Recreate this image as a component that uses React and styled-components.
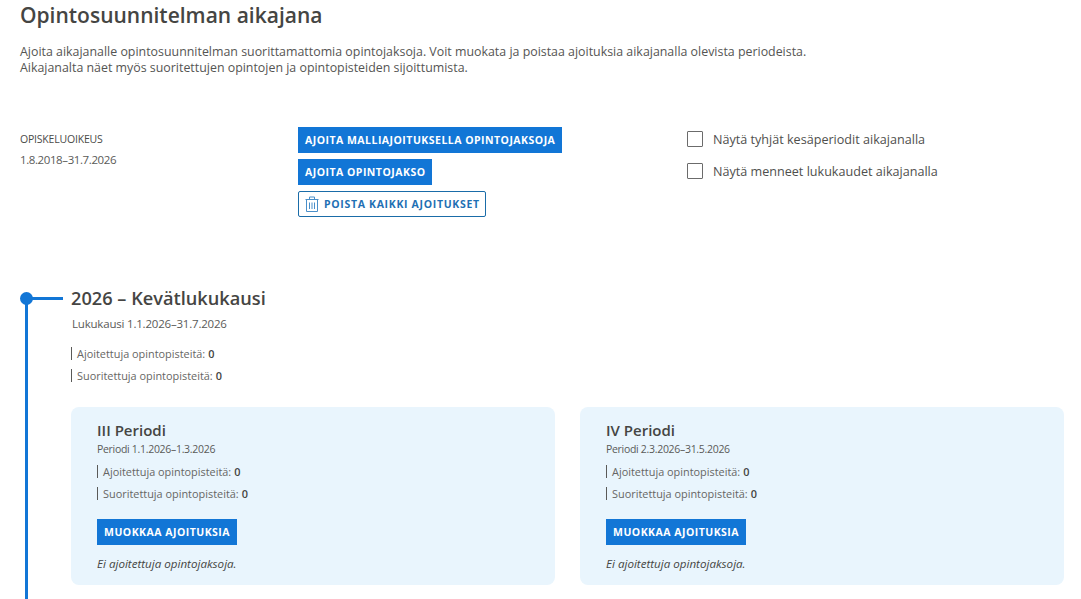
import styled, { createGlobalStyle } from "styled-components";

const GlobalStyle = createGlobalStyle`
  html, body {
    margin: 0;
    padding: 0;
    background: #fff;
    color: #4a4a48;
    font-family: "Open Sans", "Noto Sans", sans-serif;
    overflow: hidden;
  }
`;

const Page = styled.div`
  width: 1081px;
  height: 599px;
  box-sizing: border-box;
  padding: 0 17px 0 20px;
  overflow: hidden;
`;

const Title = styled.h1`
  margin: 0;
  padding-top: 1px;
  font-size: 21px;
  line-height: 28px;
  font-weight: 600;
  color: #454543;
`;

const Intro = styled.p`
  margin: 15px 0 0;
  font-size: 12.4px;
  line-height: 16px;
  color: #555553;
`;

const Controls = styled.div`
  display: grid;
  grid-template-columns: 278px 389px 1fr;
  margin-top: 51px;
  height: 90px;
`;

const RightsLabel = styled.div`
  margin-top: 5px;
  font-size: 10.5px;
  letter-spacing: -0.2px;
  line-height: 14px;
  color: #4a4a48;
`;

const RightsValue = styled.div`
  margin-top: 7px;
  font-size: 11.5px;
  letter-spacing: -0.4px;
  line-height: 14px;
  color: #5a5a58;
`;

const ButtonStack = styled.div`
  display: flex;
  flex-direction: column;
  align-items: flex-start;
  gap: 6px;
`;

const Button = styled.button`
  display: flex;
  align-items: center;
  gap: 5px;
  height: 26px;
  box-sizing: border-box;
  padding: 0 ${(props) => (props.$outlined ? "5px 0 6px" : "7px")};
  border: ${(props) => (props.$outlined ? "1px solid #1a6ca8" : "none")};
  border-radius: ${(props) => (props.$outlined ? "2px" : "0")};
  background: ${(props) => (props.$outlined ? "#fff" : "#1276d6")};
  color: ${(props) => (props.$outlined ? "#1f70b4" : "#fff")};
  font-family: inherit;
  font-size: 10.5px;
  font-weight: 700;
  letter-spacing: ${(props) => (props.$outlined ? "0.68px" : "0.48px")};
  white-space: nowrap;
`;

const CheckStack = styled.div`
  display: flex;
  flex-direction: column;
  gap: 14px;
  padding-top: 3px;
`;

const CheckRow = styled.label`
  display: flex;
  align-items: center;
  gap: 10px;
  height: 18px;
  font-size: 12.6px;
  color: #4f4f4d;
`;

const CheckBox = styled.span`
  width: 14px;
  height: 14px;
  border: 1px solid #6b6b6b;
  border-radius: 1px;
  background: #fff;
`;

const Timeline = styled.section`
  position: relative;
  display: flow-root;
  margin: 82px 0 0 5px;
  padding-left: 43px;
  border-left: 3px solid #1276d6;
  height: 400px;
`;

const Dot = styled.span`
  position: absolute;
  left: -8px;
  top: -7px;
  width: 13px;
  height: 13px;
  border-radius: 50%;
  background: #1276d6;
`;

const Connector = styled.span`
  position: absolute;
  left: 0;
  top: -2px;
  width: 35px;
  height: 3px;
  background: #1276d6;
`;

const TermTitle = styled.h2`
  margin: -13px 0 0;
  font-size: 18.2px;
  line-height: 24px;
  font-weight: 600;
  color: #454543;
`;

const TermDates = styled.div`
  margin: 6px 0 0 1px;
  font-size: 11.5px;
  letter-spacing: -0.2px;
  line-height: 16px;
  color: #5a5a58;
`;

const Stats = styled.div`
  display: flex;
  flex-direction: column;
  gap: 9px;
  margin-top: ${(props) => props.$top}px;
`;

const Stat = styled.div`
  display: flex;
  align-items: center;
  height: 13px;
  padding-left: 5px;
  border-left: 1px solid #5a5a58;
  font-size: 10.9px;
  line-height: 13px;
  color: #666664;

  b {
    margin-left: 3px;
    font-weight: 600;
    color: #454543;
  }
`;

const Cards = styled.div`
  display: grid;
  grid-template-columns: 484px 484px;
  gap: 25px;
  margin-top: 25px;
`;

const Card = styled.article`
  height: 178px;
  box-sizing: border-box;
  padding: 13px 26px 0;
  border-radius: 8px;
  background: #e9f5fd;
`;

const CardTitle = styled.h3`
  margin: 0;
  font-size: 15px;
  line-height: 20px;
  font-weight: 600;
  color: #454543;
`;

const CardDates = styled.div`
  font-size: 10.5px;
  letter-spacing: -0.3px;
  line-height: 14px;
  margin-top: 2px;
  color: #5a5a58;
`;

const CardAction = styled.div`
  margin-top: 19px;
`;

const Empty = styled.div`
  margin-top: 12px;
  font-size: 11.6px;
  line-height: 14px;
  font-style: italic;
  color: #454543;
`;

const TrashIcon = () => (
  <svg width="14" height="16" viewBox="0 0 14 16" fill="none" stroke="#4a8fc9" strokeWidth="1">
    <path d="M0.5 3.5h13M4.5 3.5V1h5v2.5M1.5 3.5v12h11v-12" />
    <path d="M4.5 6.5v6.5M7 6.5v6.5M9.5 6.5v6.5" />
  </svg>
);

const periods = [
  { name: "III Periodi", dates: "Periodi 1.1.2026–1.3.2026" },
  { name: "IV Periodi", dates: "Periodi 2.3.2026–31.5.2026" },
];

const App = () => (
  <Page>
    <GlobalStyle />
    <Title>Opintosuunnitelman aikajana</Title>
    <Intro>
      Ajoita aikajanalle opintosuunnitelman suorittamattomia opintojaksoja. Voit muokata ja poistaa ajoituksia aikajanalla olevista periodeista.
      <br />
      Aikajanalta näet myös suoritettujen opintojen ja opintopisteiden sijoittumista.
    </Intro>

    <Controls>
      <div>
        <RightsLabel>OPISKELUOIKEUS</RightsLabel>
        <RightsValue>1.8.2018–31.7.2026</RightsValue>
      </div>
      <ButtonStack>
        <Button>AJOITA MALLIAJOITUKSELLA OPINTOJAKSOJA</Button>
        <Button>AJOITA OPINTOJAKSO</Button>
        <Button $outlined>
          <TrashIcon />
          POISTA KAIKKI AJOITUKSET
        </Button>
      </ButtonStack>
      <CheckStack>
        <CheckRow>
          <CheckBox />
          Näytä tyhjät kesäperiodit aikajanalla
        </CheckRow>
        <CheckRow>
          <CheckBox />
          Näytä menneet lukukaudet aikajanalla
        </CheckRow>
      </CheckStack>
    </Controls>

    <Timeline>
      <Dot />
      <Connector />
      <TermTitle>2026 – Kevätlukukausi</TermTitle>
      <TermDates>Lukukausi 1.1.2026–31.7.2026</TermDates>
      <Stats $top={15}>
        <Stat>Ajoitettuja opintopisteitä: <b>0</b></Stat>
        <Stat>Suoritettuja opintopisteitä: <b>0</b></Stat>
      </Stats>
      <Cards>
        {periods.map((period) => (
          <Card key={period.name}>
            <CardTitle>{period.name}</CardTitle>
            <CardDates>{period.dates}</CardDates>
            <Stats $top={9}>
              <Stat>Ajoitettuja opintopisteitä: <b>0</b></Stat>
              <Stat>Suoritettuja opintopisteitä: <b>0</b></Stat>
            </Stats>
            <CardAction>
              <Button>MUOKKAA AJOITUKSIA</Button>
            </CardAction>
            <Empty>Ei ajoitettuja opintojaksoja.</Empty>
          </Card>
        ))}
      </Cards>
    </Timeline>
  </Page>
);

export default App;
